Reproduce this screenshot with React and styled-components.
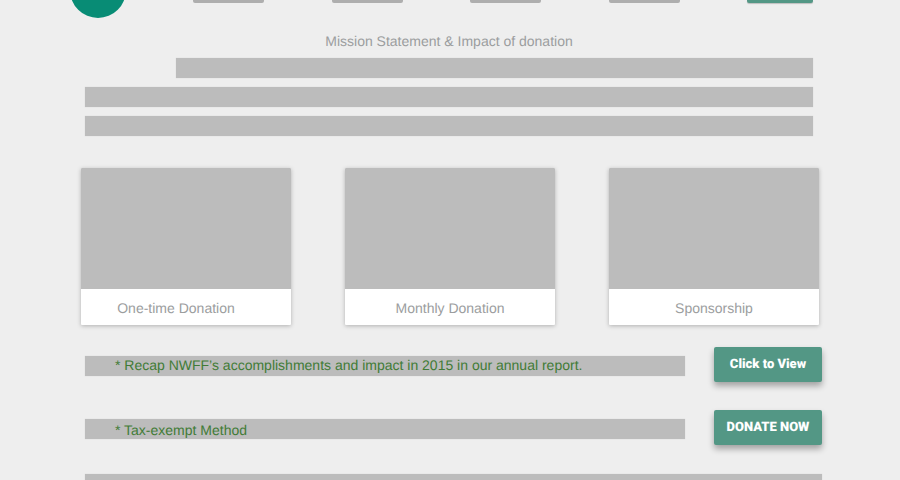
import React from "react";
import styled, { createGlobalStyle } from "styled-components";

const GlobalStyle = createGlobalStyle`
  * { box-sizing: border-box; }
  body {
    margin: 0;
    background: #eeeeee;
    color: #9b9d9e;
    font-family: "Liberation Sans", Arial, sans-serif;
    font-size: 14px;
    line-height: 18px;
    text-rendering: geometricPrecision;
  }
`;

const Page = styled.div`
  min-height: 100vh;
  overflow: hidden;
`;

const Header = styled.header`
  display: flex;
  align-items: flex-start;
  height: 18px;
  padding: 0 87px 0 70px;
`;

const LogoLink = styled.a`
  flex: none;
  display: flex;
  align-items: flex-end;
  width: 56px;
  height: 18px;
  overflow: hidden;
`;

const LogoDisc = styled.span`
  flex: none;
  width: 56px;
  height: 56px;
  border-radius: 50%;
  background: #088c75;
`;

const Nav = styled.nav`
  flex: 1;
  display: flex;
  justify-content: space-between;
  margin-left: 67px;
`;

const NavLink = styled.a`
  width: 71px;
  height: 3px;
  border-radius: 0 0 2px 2px;
  background: #aeaeae;
`;

const NavButton = styled.button`
  width: 66px;
  height: 3px;
  padding: 0;
  border: 0;
  border-radius: 0 0 2px 2px;
  background: #539785;
  box-shadow: 0 1px 1px rgba(0, 0, 0, 0.2);
`;

const Mission = styled.section`
  padding: 14px 87px 0 85px;
`;

const Heading = styled.h1`
  margin: 0 0 8px;
  font-size: 14px;
  line-height: 18px;
  font-weight: 400;
  text-align: center;
`;

const Lines = styled.div`
  display: grid;
  gap: 9px;
`;

const Line = styled.div`
  height: 20px;
  margin-left: ${({ $indent }) => ($indent ? "91px" : "0")};
  background: #bcbcbc;
  box-shadow: 0 0 1px #cccccc;
`;

const Cards = styled.section`
  display: grid;
  grid-template-columns: repeat(3, 1fr);
  gap: 54px;
  padding: 32px 81px 0;
`;

const Card = styled.article`
  border-radius: 1px;
  background: #ffffff;
  box-shadow: 0 1px 4px rgba(0, 0, 0, 0.26);
`;

const CardImage = styled.div`
  height: 121px;
  border-radius: 1px 1px 0 0;
  background: #bcbcbc;
`;

const CardTitle = styled.h2`
  margin: 0;
  padding: 10px ${({ $shift }) => ($shift ? "20px" : "0")} 8px 0;
  font-size: 14px;
  line-height: 18px;
  font-weight: 400;
  text-align: center;
`;

const Actions = styled.section`
  display: grid;
  gap: 28px;
  padding: 22px 78px 0 85px;
`;

const ActionRow = styled.div`
  display: flex;
  align-items: center;
  gap: 29px;
`;

const Note = styled.p`
  flex: 1;
  display: flex;
  align-items: ${({ $align }) => $align};
  height: 20px;
  margin: 2px 0 0;
  padding-left: 30px;
  background: #bcbcbc;
  box-shadow: 0 0 1px #cccccc;
  color: #417b36;
`;

const ActionButton = styled.button`
  width: 108px;
  height: 35px;
  padding: 0;
  border: 0;
  border-radius: 2px;
  background: #539785;
  box-shadow: 0 4px 6px rgba(0, 0, 0, 0.32);
  color: #ffffff;
  font-family: Roboto, sans-serif;
  font-size: 13px;
  font-weight: 900;
  white-space: nowrap;
  text-rendering: geometricPrecision;
  cursor: pointer;
`;

const Footer = styled.footer`
  height: 6px;
  margin: 29px 78px 0 85px;
  background: #bcbcbc;
  box-shadow: 0 0 1px #cccccc;
`;

const navItems = ["about", "programs", "events", "contact"];

const cards = [
  { title: "One-time Donation", shift: true },
  { title: "Monthly Donation" },
  { title: "Sponsorship" },
];

const actions = [
  {
    note: "* Recap NWFF’s accomplishments and impact in 2015 in our annual report.",
    label: "Click to View",
    align: "flex-start",
  },
  { note: "* Tax-exempt Method", label: "DONATE NOW", align: "flex-end" },
];

export default function App() {
  return (
    <Page>
      <GlobalStyle />
      <Header>
        <LogoLink href="#home">
          <LogoDisc />
        </LogoLink>
        <Nav>
          {navItems.map((item) => (
            <NavLink key={item} href={`#${item}`} />
          ))}
          <NavButton type="button" />
        </Nav>
      </Header>
      <main>
        <Mission>
          <Heading>Mission Statement &amp; Impact of donation</Heading>
          <Lines>
            <Line $indent />
            <Line />
            <Line />
          </Lines>
        </Mission>
        <Cards>
          {cards.map(({ title, shift }) => (
            <Card key={title}>
              <CardImage />
              <CardTitle $shift={shift}>{title}</CardTitle>
            </Card>
          ))}
        </Cards>
        <Actions>
          {actions.map(({ note, label, align }) => (
            <ActionRow key={label}>
              <Note $align={align}>{note}</Note>
              <ActionButton type="button">{label}</ActionButton>
            </ActionRow>
          ))}
        </Actions>
      </main>
      <Footer />
    </Page>
  );
}
